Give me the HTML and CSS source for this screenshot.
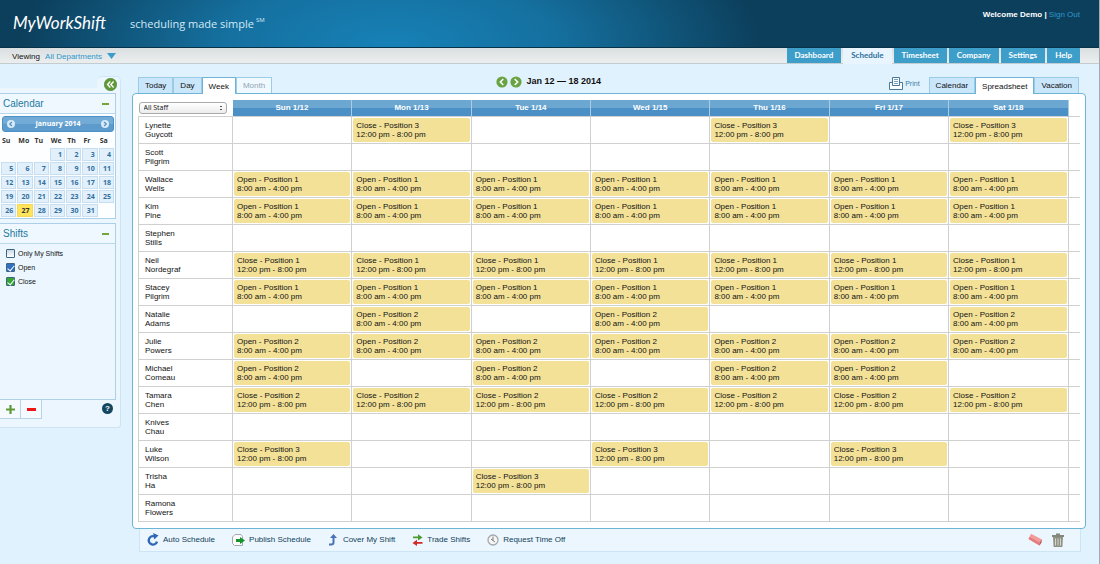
FILE: index.html
```html
<!DOCTYPE html>
<html lang="en">
<head>
<meta charset="utf-8">
<title>MyWorkShift</title>
<link rel="stylesheet" href="styles.css">
</head>
<body>
<header class="masthead">
  <div class="logo">MyWorkShift</div>
  <div class="tagline">scheduling made simple<sup>SM</sup></div>
  <div class="account">Welcome Demo | <a href="#">Sign Out</a></div>
</header>
<div class="navbar">
  <div class="viewing">Viewing <a href="#">All Departments <svg width="9" height="6" viewBox="0 0 9 6"><path d="M0 0h9L4.500 6z" fill="#3b9dcb"/></svg></a></div>
  <nav class="nav">
    <a href="#">Dashboard</a>
    <a href="#" class="current">Schedule</a>
    <a href="#">Timesheet</a>
    <a href="#">Company</a>
    <a href="#">Settings</a>
    <a href="#">Help</a>
  </nav>
</div>
<div class="page">
  <aside class="sidebar">
    <div class="collapse">
      <button aria-label="Collapse sidebar"><svg width="13" height="13" viewBox="0 0 13 13"><circle cx="6.500" cy="6.500" r="6.200" fill="#5f9a37" stroke="#4b802b" stroke-width=".6"/><path d="M6.300 3.600L3.600 6.500l2.700 2.900M9.600 3.600L6.900 6.500l2.700 2.900" fill="none" stroke="#fff" stroke-width="1.400"/></svg></button>
    </div>
    <div class="side-panel">
      <section class="box">
        <h2>Calendar<button class="fold" aria-label="Fold calendar"></button></h2>
        <div class="month">
          <button aria-label="Previous month"><svg width="8" height="8" viewBox="0 0 8 8"><circle cx="4" cy="4" r="4" fill="#d7e9f7"/><path d="M4.800 2L2.800 4l2 2" fill="none" stroke="#4f8fc4" stroke-width="1.200"/></svg></button>
          <span>January 2014</span>
          <button aria-label="Next month"><svg width="8" height="8" viewBox="0 0 8 8"><circle cx="4" cy="4" r="4" fill="#d7e9f7"/><path d="M3.200 2l2 2-2 2" fill="none" stroke="#4f8fc4" stroke-width="1.200"/></svg></button>
        </div>
        <table class="days">
          <thead><tr><th>Su</th><th>Mo</th><th>Tu</th><th>We</th><th>Th</th><th>Fr</th><th>Sa</th></tr></thead>
          <tbody id="days"></tbody>
        </table>
      </section>
      <section class="box shifts">
        <h2>Shifts<button class="fold" aria-label="Fold shifts"></button></h2>
        <label><input type="checkbox">Only My Shifts</label>
        <label><input type="checkbox" class="open" checked>Open</label>
        <label><input type="checkbox" class="close" checked>Close</label>
      </section>
      <div class="side-foot">
        <button class="tool" aria-label="Add"><svg width="9" height="9" viewBox="0 0 9 9"><path d="M3.400 0h2.200v3.400H9v2.200H5.600V9H3.400V5.600H0V3.400h3.400z" fill="#5f9a37"/></svg></button>
        <button class="tool" aria-label="Remove"><svg width="9" height="9" viewBox="0 0 9 9"><path d="M0 3h9v3H0z" fill="#ee1515"/></svg></button>
        <button class="help" aria-label="Help">?</button>
      </div>
    </div>
  </aside>
  <main class="content">
    <div class="bar">
      <div class="tabs">
        <button>Today</button><button>Day</button><button class="active">Week</button><button class="off" disabled>Month</button>
      </div>
      <div class="range">
        <button aria-label="Previous week"><svg width="12" height="12" viewBox="0 0 12 12"><circle cx="6" cy="6" r="5.600" fill="#6aa343"/><path d="M7.300 3L4.300 6l3 3" fill="none" stroke="#fff" stroke-width="1.500"/></svg></button>
        <button aria-label="Next week"><svg width="12" height="12" viewBox="0 0 12 12"><circle cx="6" cy="6" r="5.600" fill="#6aa343"/><path d="M4.700 3l3 3-3 3" fill="none" stroke="#fff" stroke-width="1.500"/></svg></button>
        <strong>Jan 12 — 18 2014</strong>
      </div>
      <div class="views">
        <a href="#" class="print"><svg width="14" height="13" viewBox="0 0 14 13" fill="#fff" stroke="#47799c"><path d="M.5 5.500h3V8h7V5.500h3v7H.5z"/><path d="M3.500.5h7v8h-7z"/><path d="M5 2.500h4M5 4.500h4M5 6.500h4" stroke="#7da3bd"/></svg>Print</a>
        <div class="tabs">
          <button>Calendar</button><button class="active">Spreadsheet</button><button>Vacation</button>
        </div>
      </div>
    </div>
    <div class="sheet">
      <table class="grid">
        <thead>
          <tr>
            <th class="who"><select aria-label="Staff"><option>All Staff</option></select></th>
            <th>Sun 1/12</th><th>Mon 1/13</th><th>Tue 1/14</th><th>Wed 1/15</th><th>Thu 1/16</th><th>Fri 1/17</th><th>Sat 1/18</th>
            <td class="end"></td>
          </tr>
        </thead>
        <tbody id="rows"></tbody>
      </table>
    </div>
    <div class="actions">
      <button><svg width="12" height="13" viewBox="0 0 12 13"><path d="M7 3.300A4.200 4.200 0 1 0 10 8.600" fill="none" stroke="#2f66b5" stroke-width="2.400"/><path d="M6.200 0l5.300 2.600-4.300 4z" fill="#2f66b5"/></svg>Auto Schedule</button>
      <button><svg width="13" height="12" viewBox="0 0 13 12"><path d="M3 .5h6l1.500 2v9h-8l-2-2V3z" fill="#fafafa" stroke="#a3a9ad"/><path d="M4 5h4V3l5 3.500L8 10V8H4z" fill="#18922a"/></svg>Publish Schedule</button>
      <button><svg width="11" height="12" viewBox="0 0 11 12"><path d="M1 10.500h2.200c1.500 0 2.300-.7 2.300-2V3" fill="none" stroke="#4a72b8" stroke-width="2"/><path d="M5.500 0L9 4H2z" fill="#4a72b8"/></svg>Cover My Shift</button>
      <button><svg width="11" height="12" viewBox="0 0 11 12"><path d="M1 2.500h5V.2l4.500 3.300L6 6.500V4.200H1z" fill="#4d9a2e"/><path d="M10.500 8H5V5.700L.5 9 5 12V9.800h5.500z" fill="#cf2a27"/></svg>Trade Shifts</button>
      <button><svg width="12" height="12" viewBox="0 0 12 12"><circle cx="6" cy="6" r="5" fill="#f6f6f6" stroke="#a4a8ab" stroke-width="1.300"/><path d="M6 2.500v4L4 5M6 6.500L8 8" fill="none" stroke="#777c80"/></svg>Request Time Off</button>
      <div class="bin">
        <button aria-label="Erase"><svg width="15" height="13" viewBox="0 0 15 13"><path d="M3 .8L14 6.500 11.500 12.500.5 6z" fill="#f39a9a"/><path d="M.5 6l11 6.500 1-2.500L1.500 4z" fill="#e27c7f"/><path d="M12 9l2-2.500-.5 3-2 3z" fill="#b95b60"/></svg></button>
        <button aria-label="Trash"><svg width="12" height="14" viewBox="0 0 12 14"><path d="M0 2h4V.5h4V2h4v2H0z" fill="#84877a"/><path d="M1 4h10l-.6 10H1.600z" fill="#8f9284"/><path d="M3.500 5.500v7M6 5.500v7M8.500 5.500v7" stroke="#d6d8cf"/></svg></button>
      </div>
    </div>
  </main>
</div>
<script src="schedule.js"></script>
</body>
</html>
```
FILE: styles.css
```css
* { box-sizing: border-box; }

body {
  margin: 0;
  min-height: 100vh;
  border-right: 1px solid #9fabb3;
  background: #e1f2ff;
  color: #111;
  font: 8px/9px "Liberation Sans", Arial, sans-serif;
}

a { color: #2f97cb; text-decoration: none; }

button {
  display: inline-flex;
  align-items: center;
  padding: 0;
  border: 0;
  background: none;
  color: inherit;
  font: inherit;
  cursor: pointer;
}

svg { display: block; flex: none; }

/* Header */
.masthead {
  display: flex;
  height: 48px;
  padding: 0 19px 0 13px;
  border-bottom: 1px solid #06324a;
  background: radial-gradient(ellipse 370px 150px at 390px 44px, #1781b7 0%, #15709f 45%, #0c3f5c 100%);
  color: #fff;
}

.logo {
  width: 117px;
  font: italic 17px/46px Lato, "Open Sans", sans-serif;
}

.tagline {
  padding-top: 16px;
  color: #d3e9f5;
  font: 11px/16px "Open Sans", sans-serif;
}

.tagline sup {
  margin-left: 2px;
  font-size: 6px;
  line-height: 0;
  vertical-align: 6px;
}

.account {
  margin-left: auto;
  padding-top: 10px;
  font-weight: bold;
}

.account a { font-weight: normal; }

.navbar {
  display: flex;
  justify-content: space-between;
  height: 16px;
  padding: 0 19px 0 12px;
  border-bottom: 1px solid #c3ccd1;
  background: linear-gradient(#dadfe1, #eceeee);
}

.viewing { padding-top: 4px; }
.viewing a { margin-left: 3px; }
.viewing svg { display: inline-block; margin-left: 3px; }

.nav {
  display: flex;
  gap: 2px;
  font: bold 8px/15px Lato, "Open Sans", sans-serif;
}

.nav a {
  height: 15px;
  padding: 0 8px;
  background: #3d9eca;
  color: #fff;
}

.nav .current {
  height: 16px;
  background: #e8f5ff;
  color: #2c6f9b;
}

/* Page */
.page {
  display: flex;
  gap: 11px;
  padding: 12px 13px 12px 0;
}

/* Sidebar */
.sidebar { width: 121px; flex: none; }

.collapse {
  width: 24px;
  height: 12px;
  margin-left: auto;
  padding: 1px 0 0 7px;
  border: 1px solid #d3e6f5;
  border-bottom: 0;
  border-left: 0;
  border-radius: 5px 5px 0 0;
  background: #ebf6ff;
}

.side-panel {
  padding: 5px 4px 8px 0;
  border: 1px solid #cfe3f2;
  border-width: 0 1px 1px 0;
  border-radius: 0 0 3px 0;
  background: #ebf6ff;
}

.box {
  margin-bottom: 4px;
  border: 1px solid #acd0e8;
  border-left: 0;
  background: #fdfeff;
}

.box h2 {
  display: flex;
  justify-content: space-between;
  align-items: center;
  height: 20px;
  margin: 0;
  padding: 0 6px 0 3px;
  border-bottom: 1px solid #b9d8ea;
  background: #f0f8ff;
  color: #2379a0;
  font: 10px/19px "Liberation Sans Narrow", "Liberation Sans", sans-serif;
}

.fold {
  width: 7px;
  height: 2px;
  background: #73a53c;
}

.month {
  display: flex;
  justify-content: space-between;
  align-items: center;
  height: 16px;
  margin: 2px 1px 0 2px;
  padding: 0 4px;
  border: 1px solid #4a91c7;
  border-radius: 3px;
  background: linear-gradient(#72abd5 50%, #5c9bcb 50%);
  color: #fff;
  font: bold 7px/14px "Open Sans", sans-serif;
}

.days {
  width: 100%;
  padding: 0;
  border-collapse: separate;
  border-spacing: 1px;
  table-layout: fixed;
  font: bold 7px/11px "Open Sans", sans-serif;
}

.days th {
  height: 14px;
  padding: 0 0 0 1px;
  text-align: left;
  color: #333;
}

.days td {
  height: 13px;
  padding: 0;
}

.days button {
  display: block;
  width: 100%;
  height: 13px;
  padding-right: 2px;
  border: 1px solid #c6def0;
  background: #e1f0fb;
  color: #336f9e;
  text-align: right;
}

.days .today {
  border-color: #f6d756;
  background: #ffe45c;
  color: #363636;
}

.shifts {
  min-height: 177px;
  margin-bottom: 0;
  background: #ebf6ff;
}

.shifts h2 { margin-bottom: 2px; }

.shifts label {
  display: flex;
  align-items: center;
  gap: 3px;
  height: 14px;
  padding-left: 6px;
  font-size: 7px;
}

.shifts input {
  appearance: none;
  width: 9px;
  height: 9px;
  margin: 0;
  border: 1px solid #3d6383;
  border-radius: 1px;
  background: linear-gradient(#cbd8e2, #fff);
}

.shifts input:checked::after {
  content: "";
  display: block;
  width: 3px;
  height: 6px;
  margin: 0 2px;
  border: solid #fff;
  border-width: 0 1px 1px 0;
  transform: rotate(40deg);
}

.shifts .open { background: #2f70c0; }
.shifts .close { background: #35a634; }

.side-foot { display: flex; align-items: flex-start; }

.tool {
  justify-content: center;
  width: 21px;
  height: 19px;
  border: 1px solid #b7d3e7;
  border-width: 0 1px 1px 0;
  background: #f4faff;
}

.help {
  justify-content: center;
  width: 11px;
  height: 11px;
  margin: 3px 3px 0 auto;
  border-radius: 50%;
  background: #134661;
  color: #fff;
  font-weight: bold;
}

/* Content */
.content { flex: 1; min-width: 0; }

.bar {
  display: grid;
  grid-template-columns: 3fr auto 4fr;
  height: 17px;
  padding: 0 7px 0 6px;
}

.tabs { display: flex; padding-top: 1px; }

.tabs button {
  height: 16px;
  padding: 0 6px;
  border: 1px solid #9ccbe6;
  border-bottom: 0;
  background: #cae6fb;
}

.tabs .active {
  position: relative;
  height: 17px;
  border-color: #6db4d6;
  background: #fff;
}

.tabs .off { background: #f0f9ff; color: #8fa6b3; }

.range {
  display: flex;
  align-items: center;
  gap: 2px;
  height: 11px;
  font-size: 9px;
}

.range strong { margin-left: 2px; }

.views {
  display: flex;
  justify-content: flex-end;
  gap: 9px;
}

.print {
  display: flex;
  gap: 2px;
  padding-top: 1px;
  color: #3c7ca5;
  font-size: 7px;
  line-height: 13px;
}

.sheet {
  padding: 6px 5px;
  border: 1px solid #6db4d6;
  border-radius: 4px;
  background: #fff;
}

.grid {
  width: 100%;
  border-collapse: collapse;
  table-layout: fixed;
}

.grid th, .grid td { padding: 0; text-align: left; }

.grid thead th {
  height: 16px;
  border-right: 1px solid #a9cbe3;
  background: linear-gradient(#6ba7d1 50%, #4a90c6 50%);
  color: #fff;
  text-align: center;
}

.grid thead .who {
  width: 94px;
  border: 0;
  background: none;
  text-align: left;
}

.grid .end { width: 12px; border-right: 0; }

.grid select {
  display: block;
  appearance: none;
  width: 88px;
  height: 12px;
  padding: 0 4px;
  border: 1px solid #aaa;
  border-radius: 3px;
  background:
    linear-gradient(#555, #555) right 4px top 3px / 2px 1px no-repeat,
    linear-gradient(#555, #555) right 4px bottom 3px / 2px 1px no-repeat,
    linear-gradient(#fff, #ececec);
  color: #111;
  font: 7px/10px "Open Sans", sans-serif;
}

.grid tbody th, .grid tbody td {
  height: 27px;
  border: solid #d0d0d0;
  border-width: 1px 1px 1px 0;
}

.grid tbody .end { border-right: 0; }

.grid tbody th {
  padding-left: 6px;
  border-left-width: 1px;
  font-weight: normal;
}

.shift {
  height: 24px;
  margin: 0 1px;
  padding: 3px 3px 0;
  border-radius: 2px;
  background: #f3e198;
  white-space: nowrap;
}

/* Action bar */
.actions {
  display: flex;
  align-items: center;
  gap: 17px;
  height: 23px;
  margin: 0 5px 0 7px;
  padding: 0 16px 0 7px;
  border: 1px solid #cde4f5;
  border-top: 0;
  background: #ebf6ff;
  color: #123f58;
}

.actions button { gap: 4px; }

.bin {
  display: flex;
  gap: 9px;
  margin-left: auto;
}
```
FILE: schedule.js
```js
const times = { Open: "8:00 am - 4:00 pm", Close: "12:00 pm - 8:00 pm" };

// Each entry: first name, last name, shift, position, working days (0 = Sunday)
const staff = [
  ["Lynette", "Guycott", "Close", 3, "146"],
  ["Scott", "Pilgrim", "", 0, ""],
  ["Wallace", "Wells", "Open", 1, "0123456"],
  ["Kim", "Pine", "Open", 1, "0123456"],
  ["Stephen", "Stills", "", 0, ""],
  ["Neil", "Nordegraf", "Close", 1, "0123456"],
  ["Stacey", "Pilgrim", "Open", 1, "0123456"],
  ["Natalie", "Adams", "Open", 2, "136"],
  ["Julie", "Powers", "Open", 2, "0123456"],
  ["Michael", "Comeau", "Open", 2, "0245"],
  ["Tamara", "Chen", "Close", 2, "0123456"],
  ["Knives", "Chau", "", 0, ""],
  ["Luke", "Wilson", "Close", 3, "035"],
  ["Trisha", "Ha", "Close", 3, "2"],
  ["Ramona", "Flowers", "", 0, ""]
];

document.getElementById("rows").innerHTML = staff.map(([first, last, shift, position, days]) => {
  let cells = "";
  for (let day = 0; day < 7; day++) {
    cells += days.includes(day)
      ? `<td><div class="shift">${shift} - Position ${position}<br>${times[shift]}</div></td>`
      : "<td></td>";
  }
  return `<tr><th>${first}<br>${last}</th>${cells}<td class="end"></td></tr>`;
}).join("");

// January 2014 starts on a Wednesday
let weeks = "";
for (let start = -2; start <= 31; start += 7) {
  weeks += "<tr>";
  for (let date = start; date < start + 7; date++) {
    weeks += date < 1 || date > 31
      ? "<td></td>"
      : `<td><button${date === 27 ? ' class="today"' : ""}>${date}</button></td>`;
  }
  weeks += "</tr>";
}
document.getElementById("days").innerHTML = weeks;
```
